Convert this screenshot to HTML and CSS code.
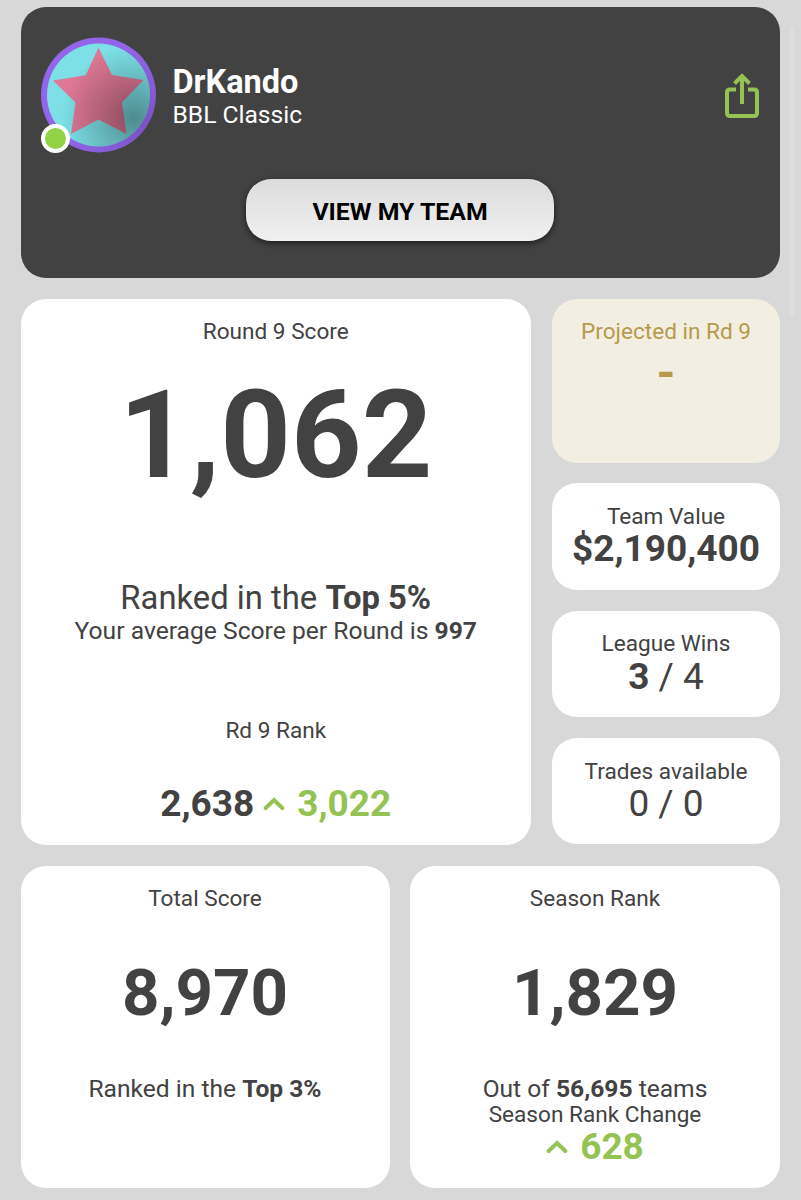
FILE: index.html
```html
<!DOCTYPE html>
<html>
    <head>
        <meta charset="UTF-8">
        <meta name="viewport" content="width=device-width, initial-scale=1.0">
        <title>BBL Classic</title>
        <link rel="stylesheet" href="styles.css">
    </head>
    <body>
        <div class="container">
            <div class="header">
                <div class="profile">
                    <div class="avatar">
                        <svg viewBox="0 0 116 116">
                            <defs>
                                <radialGradient id="shade" cx="0.84" cy="0.72" r="0.7">
                                    <stop offset="0" stop-color="#000" stop-opacity="0.38"/>
                                    <stop offset="0.4" stop-color="#000" stop-opacity="0.22"/>
                                    <stop offset="1" stop-color="#000" stop-opacity="0"/>
                                </radialGradient>
                            </defs>
                            <circle cx="57.5" cy="58" r="57.5" fill="#9365ea"/>
                            <circle cx="57.5" cy="58" r="51.5" fill="#7ce0e6"/>
                            <path d="M57.500 10.500L71 38L102.500 43L81 65.500L85.500 97L57.500 82.500L30 97L34.500 65.500L12 43.500L44.700 38.300Z" fill="#de7896"/>
                            <circle cx="57.5" cy="58" r="51.5" fill="url(#shade)"/>
                            <circle cx="57.5" cy="58" r="54.5" fill="none" stroke="url(#shade)" stroke-width="6" opacity="0.5"/>
                        </svg>
                        <span class="online"></span>
                    </div>
                    <div class="user">
                        <p class="name">DrKando</p>
                        <p class="game">BBL Classic</p>
                    </div>
                    <svg class="share" viewBox="0 0 34 46">
                        <path d="M11 16.500H5Q2 16.500 2 19.500V40Q2 43 5 43H29Q32 43 32 40V19.500Q32 16.500 29 16.500H23"/>
                        <path d="M17 31V3M9.500 10.500L17 3L24.500 10.500"/>
                    </svg>
                </div>
                <button class="team-button">VIEW MY TEAM</button>
            </div>

            <div class="round-row">
                <div class="card round">
                    <p class="label">Round 9 Score</p>
                    <p class="score">1,062</p>
                    <p class="ranked">Ranked in the <b>Top 5%</b></p>
                    <p class="average">Your average Score per Round is <b>997</b></p>
                    <p class="label rank-label">Rd 9 Rank</p>
                    <p class="value rank">
                        <b>2,638</b>
                        <svg class="arrow" viewBox="0 0 22 14"><path d="M2.700 11L11 3L19.300 11"/></svg>
                        <b class="green">3,022</b>
                    </p>
                </div>
                <div class="side">
                    <div class="card projected">
                        <p class="label">Projected in Rd 9</p>
                        <p class="dash">-</p>
                    </div>
                    <div class="card">
                        <p class="label">Team Value</p>
                        <p class="value"><b>$2,190,400</b></p>
                    </div>
                    <div class="card">
                        <p class="label">League Wins</p>
                        <p class="value"><b>3</b> / 4</p>
                    </div>
                    <div class="card">
                        <p class="label">Trades available</p>
                        <p class="value">0 / 0</p>
                    </div>
                </div>
            </div>

            <div class="season-row">
                <div class="card">
                    <p class="label">Total Score</p>
                    <p class="total">8,970</p>
                    <p class="detail">Ranked in the <b>Top 3%</b></p>
                </div>
                <div class="card season">
                    <p class="label">Season Rank</p>
                    <p class="total">1,829</p>
                    <p class="detail">Out of <b>56,695</b> teams</p>
                    <p class="label">Season Rank Change</p>
                    <p class="value rank">
                        <svg class="arrow" viewBox="0 0 22 14"><path d="M2.700 11L11 3L19.300 11"/></svg>
                        <b class="green">628</b>
                    </p>
                </div>
            </div>
        </div>
        <div class="scrollbar"></div>
    </body>
</html>
```

FILE: styles.css
```css
*{
    box-sizing: border-box;
    font-family: Roboto, sans-serif;
}

body{
    margin: 0;
    height: 1200px;
    overflow: hidden;
    background-color: #d8d8d8;
    color: #424242;
}

p{
    margin: 0;
    white-space: nowrap;
}

.container{
    width: 759.5px;
    margin-left: 20.5px;
    padding-top: 7px;
    display: flex;
    flex-direction: column;
    gap: 21px;
}

.header{
    height: 270.5px;
    padding: 30px 21px 0 20.5px;
    border-radius: 25px;
    background-color: #424242;
    color: white;
}

.profile{
    display: flex;
    height: 116px;
}

.avatar{
    position: relative;
    width: 116px;
    height: 116px;
}

.avatar svg{
    display: block;
}

.online{
    position: absolute;
    left: 0;
    bottom: 0;
    width: 29px;
    height: 29px;
    border: 4px solid white;
    border-radius: 50%;
    background-color: #91d344;
}

.user{
    flex: 1;
    padding: 26px 0 0 15.5px;
}

.name{
    font-size: 32.5px;
    line-height: 38px;
    font-weight: bold;
}

.game{
    font-size: 24.6px;
    line-height: 27px;
}

.share{
    width: 34px;
    height: 46px;
    margin-top: 35.5px;
}

.share path{
    fill: none;
    stroke: #94c353;
    stroke-width: 4;
}

.team-button{
    display: block;
    width: 308px;
    height: 61.5px;
    margin: 26px auto 0;
    padding: 3px 0 0;
    border: none;
    border-radius: 25px;
    background: linear-gradient(#dcdcdc, #f0f0f0);
    box-shadow: 0 2px 6px rgba(0, 0, 0, 0.6);
    color: black;
    font-size: 24.8px;
    font-weight: bold;
}

.card{
    padding-top: 20.7px;
    border-radius: 25px;
    background-color: white;
    text-align: center;
}

.label{
    font-size: 22.6px;
    line-height: 26px;
}

.value{
    padding-top: 0.4px;
    font-size: 37px;
    line-height: 38px;
}

.round-row{
    display: grid;
    grid-template-columns: 510.5px 228px;
    gap: 21px;
    height: 546px;
}

.score{
    margin-top: 17.8px;
    font-size: 123.3px;
    line-height: 144px;
    font-weight: bold;
}

.ranked{
    margin-top: 72px;
    font-size: 32.8px;
    line-height: 38px;
}

.average{
    font-size: 24.65px;
    line-height: 28px;
}

.rank-label{
    margin-top: 73px;
}

.rank{
    display: flex;
    align-items: center;
    justify-content: center;
}

.round .rank{
    margin-top: 40.5px;
}

.arrow{
    width: 22px;
    height: 14px;
    margin: 0 12px 0 9px;
}

.season .arrow{
    margin-left: 0;
}

.arrow path{
    fill: none;
    stroke: #94c353;
    stroke-width: 4;
    stroke-linecap: round;
}

.green{
    color: #94c353;
}

.side{
    display: grid;
    grid-template-rows: 164px 106.5px 106.5px 106.5px;
    gap: 20.8px;
}

.projected{
    background-color: #f3eee2;
    color: #b59a4c;
}

.dash{
    margin-top: 4px;
    font-size: 48px;
    line-height: 48px;
    font-weight: bold;
}

.season-row{
    display: grid;
    grid-template-columns: 369px 370px;
    gap: 20.5px;
    height: 322px;
}

.total{
    margin-top: 42.8px;
    font-size: 65.4px;
    line-height: 76px;
    font-weight: bold;
}

.detail{
    margin-top: 45px;
    font-size: 24.6px;
    line-height: 26px;
}

.season .rank{
    margin-top: -0.4px;
}

.scrollbar{
    position: absolute;
    top: 26px;
    left: 789px;
    width: 6px;
    height: 291px;
    border-radius: 3px;
    background-color: #dcdcdc;
}
```
